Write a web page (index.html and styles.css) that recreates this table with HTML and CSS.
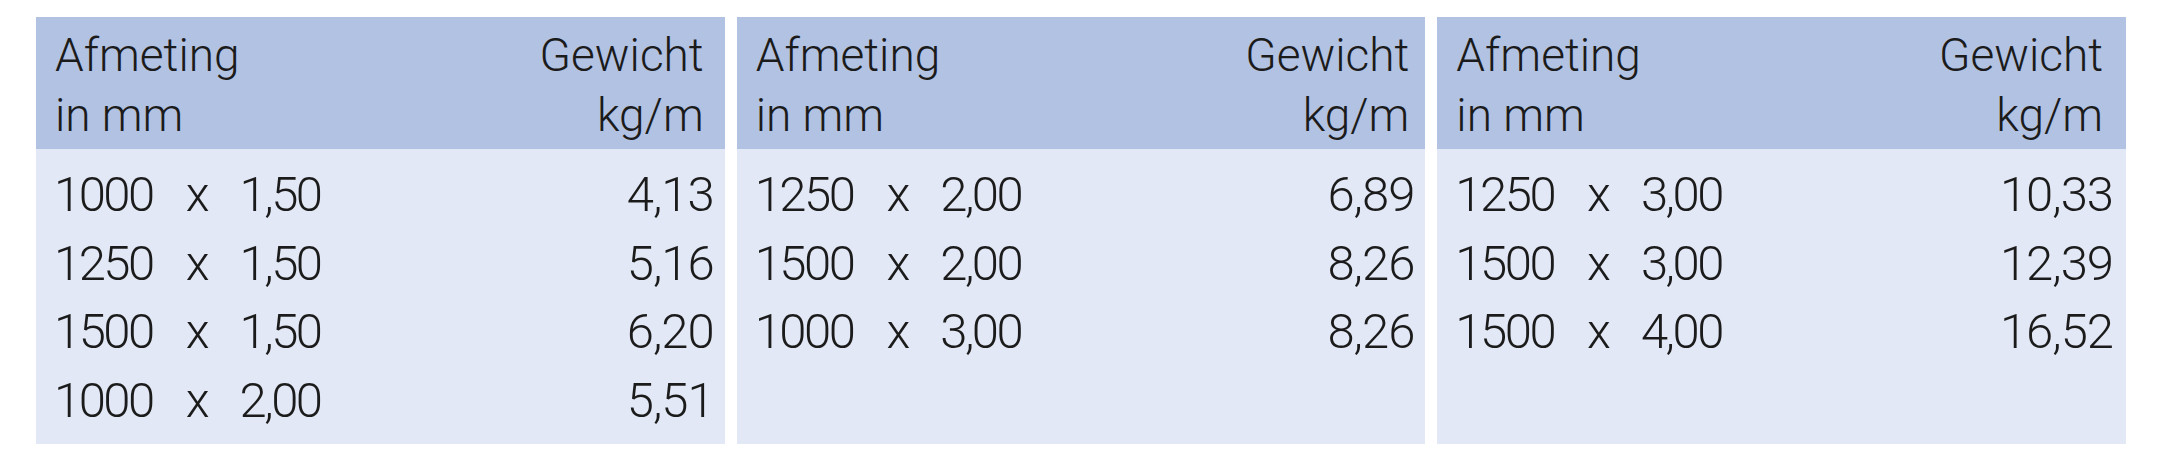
FILE: index.html
```html
<!DOCTYPE html>
<html lang="nl">
<head>
<meta charset="utf-8">
<title>Afmeting en gewicht</title>
<link rel="stylesheet" href="styles.css">
</head>
<body>
<div class="tables">
  <section class="panel panel--a">
    <div class="head">
      <div class="head-left">Afmeting<br>in mm</div>
      <div class="head-right">Gewicht<br>kg/m</div>
    </div>
    <div class="rows">
      <div class="row"><span class="dim">1000</span><span class="times">x</span><span class="dim">1,50</span><span class="weight">4,13</span></div>
      <div class="row"><span class="dim">1250</span><span class="times">x</span><span class="dim">1,50</span><span class="weight">5,16</span></div>
      <div class="row"><span class="dim">1500</span><span class="times">x</span><span class="dim">1,50</span><span class="weight">6,20</span></div>
      <div class="row"><span class="dim">1000</span><span class="times">x</span><span class="dim">2,00</span><span class="weight">5,51</span></div>
    </div>
  </section>
  <section class="panel panel--b">
    <div class="head">
      <div class="head-left">Afmeting<br>in mm</div>
      <div class="head-right">Gewicht<br>kg/m</div>
    </div>
    <div class="rows">
      <div class="row"><span class="dim">1250</span><span class="times">x</span><span class="dim">2,00</span><span class="weight">6,89</span></div>
      <div class="row"><span class="dim">1500</span><span class="times">x</span><span class="dim">2,00</span><span class="weight">8,26</span></div>
      <div class="row"><span class="dim">1000</span><span class="times">x</span><span class="dim">3,00</span><span class="weight">8,26</span></div>
    </div>
  </section>
  <section class="panel panel--c">
    <div class="head">
      <div class="head-left">Afmeting<br>in mm</div>
      <div class="head-right">Gewicht<br>kg/m</div>
    </div>
    <div class="rows">
      <div class="row"><span class="dim">1250</span><span class="times">x</span><span class="dim">3,00</span><span class="weight">10,33</span></div>
      <div class="row"><span class="dim">1500</span><span class="times">x</span><span class="dim">3,00</span><span class="weight">12,39</span></div>
      <div class="row"><span class="dim">1500</span><span class="times">x</span><span class="dim">4,00</span><span class="weight">16,52</span></div>
    </div>
  </section>
</div>
</body>
</html>
```

FILE: styles.css
```css
html, body {
  margin: 0;
  padding: 0;
  background: #ffffff;
}

body {
  font-family: Roboto, "Liberation Sans", sans-serif;
  font-weight: 300;
  color: #1b1b1b;
}

.tables {
  display: flex;
  gap: 12px;
  padding: 17px 39px 17px 36px;
}

.panel {
  flex: 1 1 0;
  height: 427px;
  display: flex;
  flex-direction: column;
  background: #e2e8f5;
}

.head {
  display: flex;
  justify-content: space-between;
  background: #b2c2e3;
  height: 132px;
  box-sizing: border-box;
  padding: 8px 21px 4px 19px;
  font-size: 46px;
  line-height: 60px;
}

.head-right {
  text-align: right;
}

.panel--b .head {
  padding-right: 16px;
}

.panel--c .head {
  padding-right: 23px;
}

.rows {
  padding: 12px 11px 0 18px;
  font-size: 49px;
  line-height: 68.67px;
}

.panel--c .rows {
  padding-right: 13px;
}

.row {
  display: flex;
  align-items: baseline;
}

.dim {
  letter-spacing: -2.5px;
}

.times {
  margin: 0 30px 0 33px;
}

.weight {
  margin-left: auto;
  letter-spacing: -1px;
}
```
